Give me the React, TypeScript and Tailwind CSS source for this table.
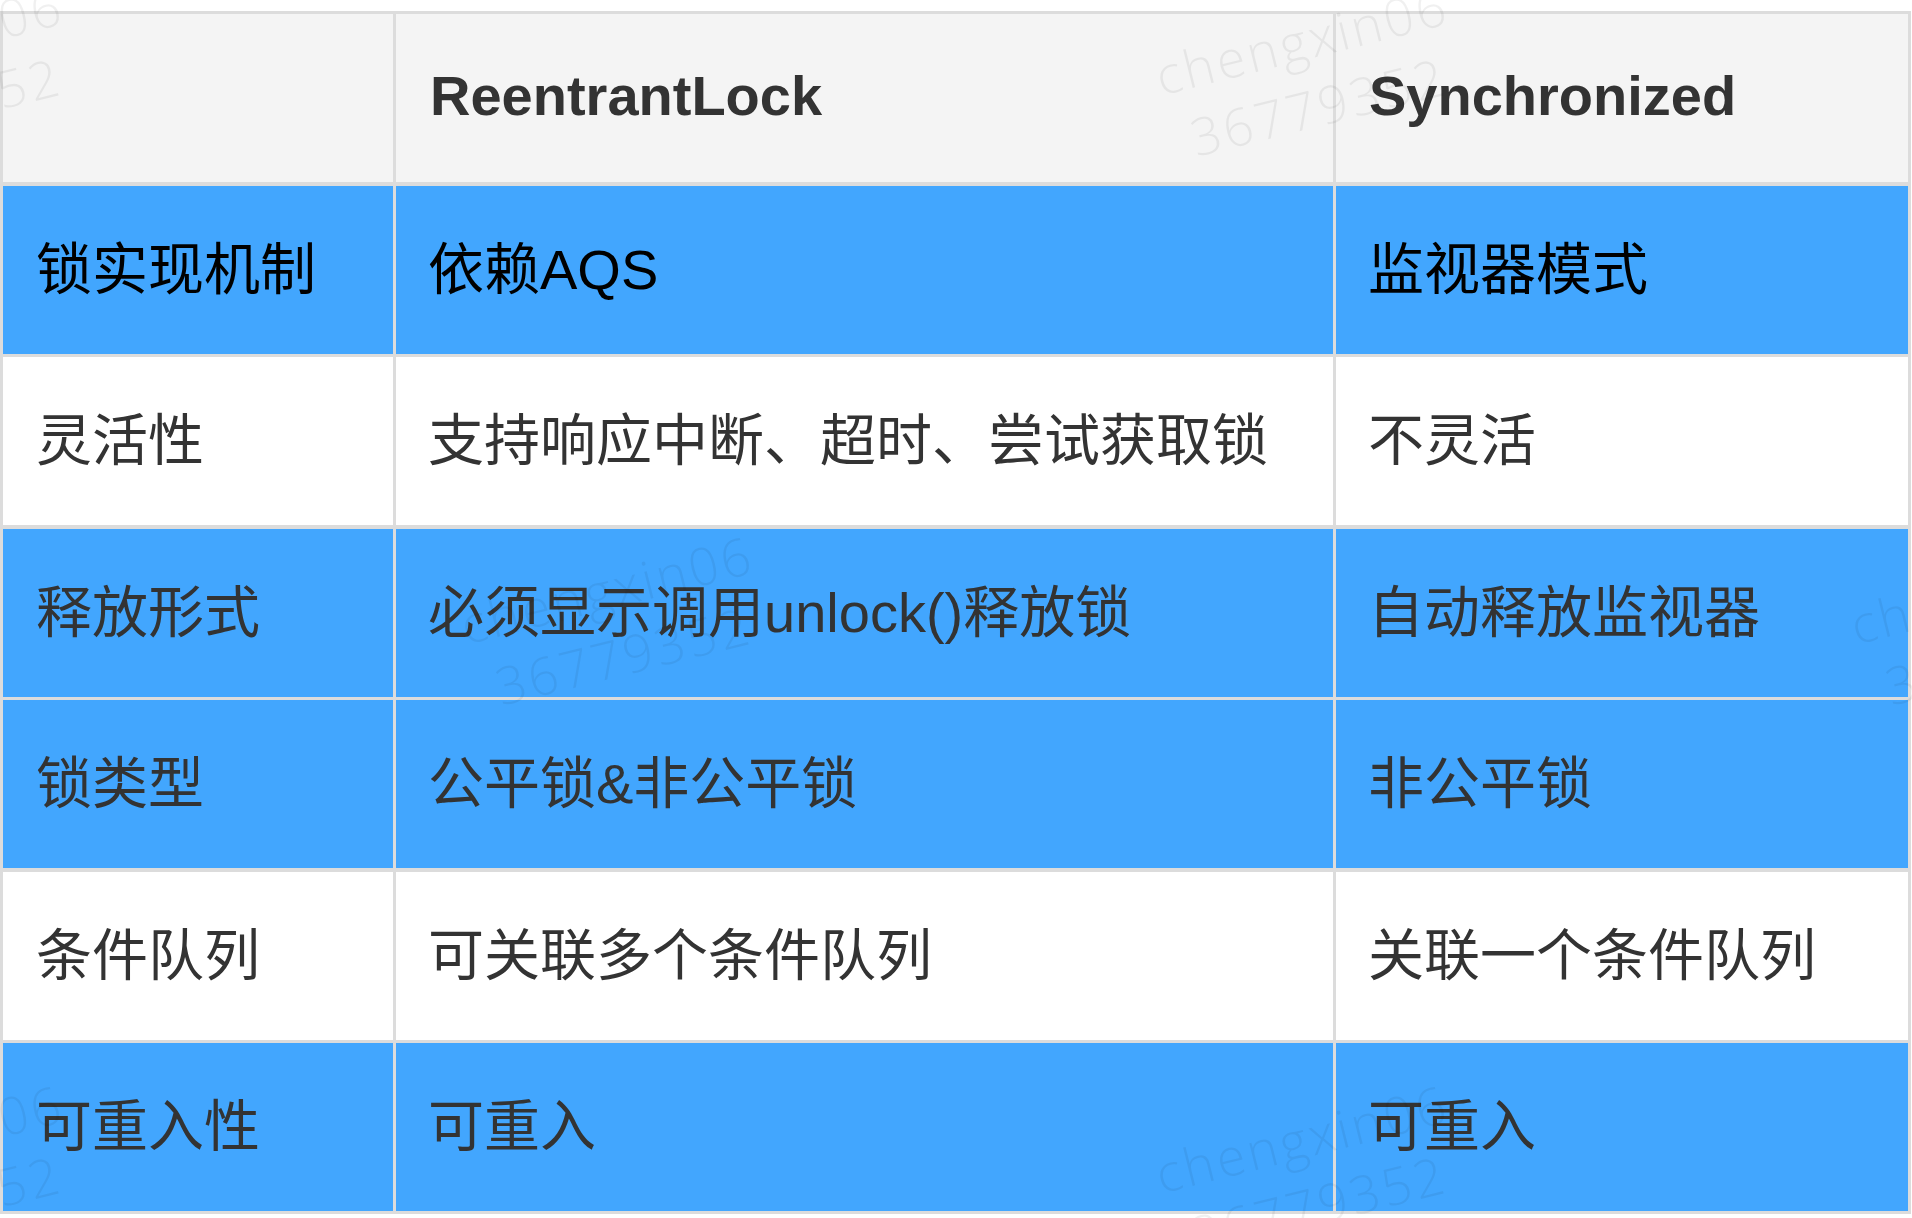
import React from "react";

type Row = { cells: [string, string, string]; blue: boolean; strong?: boolean };

const rows: Row[] = [
  { cells: ["锁实现机制", "依赖AQS", "监视器模式"], blue: true, strong: true },
  { cells: ["灵活性", "支持响应中断、超时、尝试获取锁", "不灵活"], blue: false },
  { cells: ["释放形式", "必须显示调用unlock()释放锁", "自动释放监视器"], blue: true },
  { cells: ["锁类型", "公平锁&非公平锁", "非公平锁"], blue: true },
  { cells: ["条件队列", "可关联多个条件队列", "关联一个条件队列"], blue: false },
  { cells: ["可重入性", "可重入", "可重入"], blue: true },
];

const marks: { x: number; y: number }[] = [
  { x: -75, y: 73 },
  { x: 1310, y: 73 },
  { x: 615, y: 622 },
  { x: 2005, y: 622 },
  { x: -75, y: 1171 },
  { x: 1310, y: 1171 },
];

function Watermark({ x, y }: { x: number; y: number }) {
  return (
    <div
      className="pointer-events-none absolute -translate-x-1/2 -translate-y-1/2 -rotate-[14deg] whitespace-nowrap text-center font-['Open_Sans','Noto_Sans',sans-serif] text-[52px] font-light leading-[68px] tracking-[3px] text-[rgba(0,0,0,0.06)]"
      style={{ left: x, top: y }}
    >
      <div>chengxin06</div>
      <div>36779352</div>
    </div>
  );
}

export default function App() {
  return (
    <div className="relative h-[1218px] w-[1912px] overflow-hidden bg-white font-['Liberation_Sans','Noto_Sans_CJK_SC',sans-serif]">
      <div className="pt-[11px]">
        <div className="grid w-[1911px] grid-cols-[390px_937px_572px] gap-x-[3px] gap-y-[3.5px] bg-[#dcdcdc] p-[3px]">
          <div className="h-[168px] bg-[#f4f4f4]" />
          <div className="flex h-[168px] items-center bg-[#f4f4f4] pb-[4px] pl-[34px] text-[56px] font-bold text-[#333]">
            ReentrantLock
          </div>
          <div className="flex h-[168px] items-center bg-[#f4f4f4] pb-[4px] pl-[33px] text-[56px] font-bold text-[#333]">
            Synchronized
          </div>
          {rows.map((r, i) =>
            r.cells.map((c, j) => (
              <div
                key={`${i}-${j}`}
                className={`flex h-[168px] items-center whitespace-nowrap text-[56px] ${
                  j === 0 ? "pl-[33px]" : "pl-[32px]"
                } ${r.blue ? "bg-[#42a6fe]" : "bg-white"} ${
                  r.strong ? "text-black" : "text-[#333]"
                }`}
              >
                {c}
              </div>
            ))
          )}
        </div>
      </div>
      {marks.map((m, i) => (
        <Watermark key={i} x={m.x} y={m.y} />
      ))}
    </div>
  );
}
